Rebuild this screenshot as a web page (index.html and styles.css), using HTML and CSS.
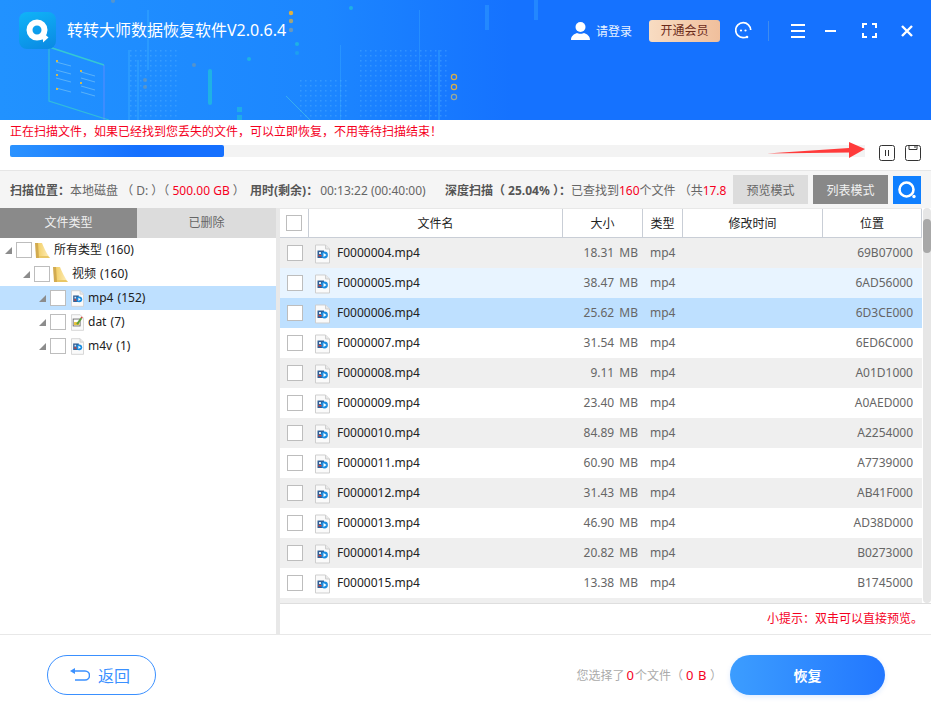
FILE: index.html
```html
<!DOCTYPE html>
<html lang="zh-CN">
<head>
  <meta charset="UTF-8">
  <title>转转大师数据恢复软件</title>
  <link rel="stylesheet" href="styles.css">
</head>
<body>
<svg class="defs" width="0" height="0">
  <defs>
    <linearGradient id="folder-fill" x1="0" y1="0" x2="1" y2="0">
      <stop offset="0" stop-color="#f2cf68"/>
      <stop offset="1" stop-color="#fff0c0"/>
    </linearGradient>
  </defs>
  <symbol id="ico-video" viewBox="0 0 15 19">
    <path d="M.5.5h10l4 4v14H.5z" fill="#fafafa" stroke="#cfcfcf"/>
    <path d="M10.500.5v4h4" fill="#e8e8e8" stroke="#cfcfcf"/>
    <rect x="2.500" y="6" width="6.500" height="7.500" fill="#2f5f96"/>
    <rect x="4" y="7.500" width="2" height="2" fill="#d8e6f5"/>
    <circle cx="9.500" cy="10.500" r="3.400" fill="#1a8de0"/>
    <path d="M8.500 8.500l3 2-3 2z" fill="#fff"/>
    <rect x="3.500" y="10.500" width="3" height="1.400" fill="#d8433a"/>
  </symbol>
  <symbol id="ico-dat" viewBox="0 0 15 19">
    <path d="M.5.5h10l4 4v14H.5z" fill="#fafafa" stroke="#cfcfcf"/>
    <rect x="2.500" y="5.500" width="8" height="8" fill="#fff" stroke="#666"/>
    <rect x="3.500" y="9" width="6" height="3.500" fill="#e8c23a"/>
    <path d="M6 11l5-7 2 1-5 7z" fill="#5f9e3a"/>
    <path d="M11 4l2 1 .5-1.500-1.500-1z" fill="#d8433a"/>
  </symbol>
  <symbol id="ico-folder" viewBox="0 0 16 17">
    <path d="M0 1h4l1 1v14H1z" fill="#d2ab50"/>
    <path d="M3 1h4c2 5 5 11 8 15H4z" fill="url(#folder-fill)"/>
    <path d="M4 16h11l-2-2H4z" fill="#e9c766"/>
  </symbol>
  <pattern id="dots" width="5" height="5" patternUnits="userSpaceOnUse">
    <rect width="1.500" height="1.500" fill="#6fc4ff" fill-opacity=".28"/>
  </pattern>
</svg>

<div class="app">
  <header class="top">
    <svg class="top-art" width="931" height="120" viewBox="0 0 931 120">
      <g fill="url(#dots)">
        <rect x="128" y="50" width="50" height="70"/>
        <rect x="360" y="50" width="90" height="70"/>
        <rect x="300" y="80" width="50" height="40"/>
      </g>
      <path d="M49 47l55 18" fill="none" stroke="#3fe0c0" stroke-opacity=".7" stroke-width="1.400"/>
      <path d="M49 47v54l60 19" fill="none" stroke="#3fe0c0" stroke-opacity=".55" stroke-width="1.200"/>
      <path d="M104 65v55" fill="none" stroke="#9a8cff" stroke-opacity=".4" stroke-width="1.200"/>
      <g stroke="#9fdcf0" stroke-opacity=".45" stroke-width="1">
        <path d="M56 62l15 4M56 70l15 4M56 78l15 4M56 88l15 4M81 72l14 4M81 78l14 4M81 86l14 4M81 92l14 4"/>
      </g>
      <g fill="#f0c030" fill-opacity=".85">
        <rect x="56" y="60" width="2" height="2"/><rect x="56" y="74" width="2" height="2"/>
        <rect x="56" y="88" width="2" height="2"/><rect x="80" y="70" width="2" height="2"/>
        <rect x="80" y="82" width="2" height="2"/>
      </g>
      <g fill="#47c0ff" fill-opacity=".28">
        <rect x="128" y="50" width="2" height="70"/><rect x="137" y="60" width="2" height="60"/>
        <rect x="147" y="10" width="2" height="60"/><rect x="340" y="45" width="1" height="75"/>
        <rect x="419" y="10" width="1" height="60"/><rect x="438" y="50" width="2" height="70"/>
        <rect x="429" y="60" width="1" height="60"/><rect x="485" y="5" width="4" height="25"/>
        <rect x="534" y="0" width="4" height="20"/>
      </g>
      <rect x="208" y="69" width="4" height="36" rx="2" fill="#1fc3d8" fill-opacity=".7"/>
      <rect x="237" y="107" width="5" height="5" fill="#1fc3d8" fill-opacity=".6"/>
      <rect x="237" y="115" width="5" height="5" fill="#1fc3d8" fill-opacity=".6"/>
      <path d="M286 96l24 24" stroke="#4fd4e0" stroke-opacity=".5"/>
      <g fill="#e0b040">
        <circle cx="291" cy="13" r="2.200"/>
        <circle cx="291" cy="21" r="2.200" fill-opacity=".7"/>
        <circle cx="291" cy="30" r="2.200" fill="#8aa0a0" fill-opacity=".7"/>
      </g>
      <g fill="#1fc3d8" fill-opacity=".7">
        <circle cx="351" cy="8" r="2"/><circle cx="297" cy="44" r="2"/>
        <circle cx="297" cy="53" r="2" fill-opacity=".4"/><circle cx="249" cy="59" r="2"/>
      </g>
      <g fill="#7a9aaa" fill-opacity=".6">
        <circle cx="194" cy="65" r="2"/><circle cx="145" cy="80" r="2"/><circle cx="145" cy="87" r="2"/>
        <circle cx="113" cy="1" r="2"/>
      </g>
      <g fill="none" stroke="#d8ac48" stroke-width="1.200">
        <circle cx="454" cy="77" r="2.600"/><circle cx="454" cy="87" r="2.600"/>
        <circle cx="454" cy="97" r="2.600" stroke="#9aa89a"/>
      </g>
    </svg>
    <div class="top-row">
      <div class="logo">
        <svg width="37" height="37" viewBox="0 0 37 37">
          <circle cx="18" cy="18" r="7.500" fill="none" stroke="#fff" stroke-width="6"/>
          <path d="M20 24h4v-3.500l5.500 5-5.500 5v-3h-5z" fill="#fff"/>
        </svg>
      </div>
      <div class="app-name">转转大师数据恢复软件V2.0.6.4</div>
      <div class="top-tools">
        <svg class="ic-user" width="19" height="18" viewBox="0 0 19 18">
          <ellipse cx="9.500" cy="5" rx="5" ry="5" fill="#fff"/>
          <path d="M0 18c0-4 3-6 6-7 1 1 6 1 7 0 3 1 6 3 6 7z" fill="#fff"/>
        </svg>
        <span class="login">请登录</span>
        <span class="vip">开通会员</span>
        <svg class="ic-help" width="18" height="19" viewBox="0 0 18 19">
          <path d="M15.700 9A7.500 7.500 0 1 0 8 16.700c1.500 0 3-.2 4-.7" fill="none" stroke="#fff" stroke-width="1.700"/>
          <circle cx="6" cy="9.500" r="1.100" fill="#fff"/><circle cx="10.500" cy="9.500" r="1.100" fill="#fff"/>
          <circle cx="12" cy="16" r="1.300" fill="#fff"/>
        </svg>
        <i class="top-sep"></i>
        <svg class="ic-menu" width="14" height="14" viewBox="0 0 14 14">
          <path d="M0 1h14M0 7h14M0 13h14" stroke="#fff" stroke-width="2"/>
        </svg>
        <svg class="ic-min" width="11" height="2" viewBox="0 0 11 2"><path d="M0 1h11" stroke="#fff" stroke-width="2"/></svg>
        <svg class="ic-full" width="15" height="15" viewBox="0 0 15 15">
          <path d="M1 5V1h4M10 1h4v4M14 10v4h-4M5 14H1v-4" fill="none" stroke="#fff" stroke-width="2"/>
        </svg>
        <svg class="ic-close" width="12" height="12" viewBox="0 0 12 12">
          <path d="M1 1l10 10M11 1L1 11" stroke="#fff" stroke-width="2.400"/>
        </svg>
      </div>
    </div>
  </header>

  <section class="scan">
    <p class="scan-msg">正在扫描文件，如果已经找到您丢失的文件，可以立即恢复，不用等待扫描结束！</p>
    <div class="scan-row">
      <div class="track"><div class="fill"></div></div>
      <svg class="btn-ic" width="16" height="16" viewBox="0 0 16 16">
        <rect x=".5" y=".5" width="15" height="15" rx="2" fill="#fff" stroke="#333"/>
        <path d="M6.500 5v6M9.500 5v6" stroke="#333"/>
      </svg>
      <svg class="btn-ic" width="16" height="16" viewBox="0 0 16 16">
        <rect x=".5" y=".5" width="15" height="15" rx="2" fill="#fff" stroke="#333"/>
        <path d="M4 .5v4h8v-4M10 1v2" fill="none" stroke="#333"/>
      </svg>
    </div>
    <svg class="arrow" width="100" height="18" viewBox="0 0 100 18">
      <path d="M0 11.500L82 6 82 0 98 7 82 16 82 10.500z" fill="#ff3b3b"/>
    </svg>
  </section>

  <section class="info">
    <div class="info-text">
      <span class="seg1"><b>扫描位置：</b>本地磁盘 （ D: ）（ <em>500.00 GB</em> ）</span>
      <span class="seg2"><b>用时(剩余)：</b>00:13:22 (00:40:00)</span>
      <span class="seg3"><b>深度扫描（ 25.04% ）：</b>已查找到<em>160</em>个文件 （共<em>17.8</em></span>
    </div>
    <button class="mode">预览模式</button>
    <button class="mode on">列表模式</button>
    <button class="search">
      <svg width="20" height="20" viewBox="0 0 20 20">
        <circle cx="9.500" cy="9.500" r="7" fill="none" stroke="#fff" stroke-width="2.600"/>
        <circle cx="17" cy="16.500" r="1.700" fill="#fff"/>
      </svg>
    </button>
  </section>

  <main class="body">
    <aside class="side">
      <div class="tabs">
        <div class="tab on">文件类型</div>
        <div class="tab">已删除</div>
      </div>
      <ul class="tree">
        <li class="lv0"><i class="tri"></i><i class="chk"></i><svg class="ic-f"><use href="#ico-folder"/></svg><span>所有类型 (160)</span></li>
        <li class="lv1"><i class="tri"></i><i class="chk"></i><svg class="ic-f"><use href="#ico-folder"/></svg><span>视频 (160)</span></li>
        <li class="lv2 sel"><i class="tri"></i><i class="chk"></i><svg class="ic-t"><use href="#ico-video"/></svg><span>mp4 (152)</span></li>
        <li class="lv2"><i class="tri"></i><i class="chk"></i><svg class="ic-t"><use href="#ico-dat"/></svg><span>dat (7)</span></li>
        <li class="lv2"><i class="tri"></i><i class="chk"></i><svg class="ic-t"><use href="#ico-video"/></svg><span>m4v (1)</span></li>
      </ul>
    </aside>

    <div class="list">
      <div class="table-wrap">
        <div class="table">
          <div class="thead">
            <div class="th"><i class="chk"></i></div>
            <div class="th">文件名</div>
            <div class="th">大小</div>
            <div class="th">类型</div>
            <div class="th">修改时间</div>
            <div class="th">位置</div>
          </div>
          <div class="tr gray"><div class="c-chk"><i class="chk"></i></div><div class="c-name"><svg class="ic-r"><use href="#ico-video"/></svg><span>F0000004.mp4</span></div><div class="c-size">18.31 MB</div><div class="c-type">mp4</div><div></div><div class="c-pos">69B07000</div></div>
          <div class="tr hover"><div class="c-chk"><i class="chk"></i></div><div class="c-name"><svg class="ic-r"><use href="#ico-video"/></svg><span>F0000005.mp4</span></div><div class="c-size">38.47 MB</div><div class="c-type">mp4</div><div></div><div class="c-pos">6AD56000</div></div>
          <div class="tr sel"><div class="c-chk"><i class="chk"></i></div><div class="c-name"><svg class="ic-r"><use href="#ico-video"/></svg><span>F0000006.mp4</span></div><div class="c-size">25.62 MB</div><div class="c-type">mp4</div><div></div><div class="c-pos">6D3CE000</div></div>
          <div class="tr"><div class="c-chk"><i class="chk"></i></div><div class="c-name"><svg class="ic-r"><use href="#ico-video"/></svg><span>F0000007.mp4</span></div><div class="c-size">31.54 MB</div><div class="c-type">mp4</div><div></div><div class="c-pos">6ED6C000</div></div>
          <div class="tr gray"><div class="c-chk"><i class="chk"></i></div><div class="c-name"><svg class="ic-r"><use href="#ico-video"/></svg><span>F0000008.mp4</span></div><div class="c-size">9.11 MB</div><div class="c-type">mp4</div><div></div><div class="c-pos">A01D1000</div></div>
          <div class="tr"><div class="c-chk"><i class="chk"></i></div><div class="c-name"><svg class="ic-r"><use href="#ico-video"/></svg><span>F0000009.mp4</span></div><div class="c-size">23.40 MB</div><div class="c-type">mp4</div><div></div><div class="c-pos">A0AED000</div></div>
          <div class="tr gray"><div class="c-chk"><i class="chk"></i></div><div class="c-name"><svg class="ic-r"><use href="#ico-video"/></svg><span>F0000010.mp4</span></div><div class="c-size">84.89 MB</div><div class="c-type">mp4</div><div></div><div class="c-pos">A2254000</div></div>
          <div class="tr"><div class="c-chk"><i class="chk"></i></div><div class="c-name"><svg class="ic-r"><use href="#ico-video"/></svg><span>F0000011.mp4</span></div><div class="c-size">60.90 MB</div><div class="c-type">mp4</div><div></div><div class="c-pos">A7739000</div></div>
          <div class="tr gray"><div class="c-chk"><i class="chk"></i></div><div class="c-name"><svg class="ic-r"><use href="#ico-video"/></svg><span>F0000012.mp4</span></div><div class="c-size">31.43 MB</div><div class="c-type">mp4</div><div></div><div class="c-pos">AB41F000</div></div>
          <div class="tr"><div class="c-chk"><i class="chk"></i></div><div class="c-name"><svg class="ic-r"><use href="#ico-video"/></svg><span>F0000013.mp4</span></div><div class="c-size">46.90 MB</div><div class="c-type">mp4</div><div></div><div class="c-pos">AD38D000</div></div>
          <div class="tr gray"><div class="c-chk"><i class="chk"></i></div><div class="c-name"><svg class="ic-r"><use href="#ico-video"/></svg><span>F0000014.mp4</span></div><div class="c-size">20.82 MB</div><div class="c-type">mp4</div><div></div><div class="c-pos">B0273000</div></div>
          <div class="tr"><div class="c-chk"><i class="chk"></i></div><div class="c-name"><svg class="ic-r"><use href="#ico-video"/></svg><span>F0000015.mp4</span></div><div class="c-size">13.38 MB</div><div class="c-type">mp4</div><div></div><div class="c-pos">B1745000</div></div>
          <div class="tr gray"></div>
        </div>
        <div class="scrollbar"><div class="thumb"></div></div>
      </div>
      <div class="tip">小提示：双击可以直接预览。</div>
    </div>
  </main>

  <footer class="foot">
    <button class="back">
      <svg width="20" height="14" viewBox="0 0 20 14">
        <path d="M4 3h11a4.500 4.500 0 0 1 0 9H5" fill="none" stroke="#3a90ff" stroke-width="1.500"/>
        <path d="M5 0v6L0 3z" fill="#3a90ff"/>
      </svg>
      返回
    </button>
    <div class="picked">您选择了<em class="n">0</em>个文件（ <em class="sz">0 B</em> ）</div>
    <button class="recover">恢复</button>
  </footer>
</div>
</body>
</html>
```

FILE: styles.css
```css
*{margin:0; padding:0; box-sizing:border-box; list-style:none;}
html,body{width:931px; height:715px; overflow:hidden; background:#fff;}
body{font-family:"Noto Sans","Noto Sans CJK SC",sans-serif; font-size:12px; color:#333;}
em{font-style:normal; color:#f5001e;}
i{display:block; font-style:normal;}
button{font-family:inherit; border:none; cursor:pointer;}
.defs{position:absolute;}
.app{display:flex; flex-direction:column; height:715px;}

/* header */
.top{position:relative; height:120px; flex:none; background:linear-gradient(90deg,#2192ff 0,#1c86ff 35%,#1572ff 55%,#1572ff 100%); overflow:hidden;}
.top-art{position:absolute; left:0; top:0;}
.top-row{position:relative; display:flex; align-items:center; height:37px; margin-top:12px; padding:0 18px 0 19px;}
.logo{width:37px; height:37px; border-radius:8px; background:linear-gradient(160deg,#10b4f8,#0a88e2);}
.app-name{margin-left:11px; font-size:16px; color:#fff; line-height:37px;}
.top-tools{margin-left:auto; display:flex; align-items:center; color:#fff;}
.login{margin-left:6px; margin-right:17px; color:#e8f2ff;}
.vip{width:71px; height:22px; line-height:22px; text-align:center; border-radius:3px; background:linear-gradient(90deg,#f8dcc2,#f0bf9c); color:#6b2a1a;}
.ic-help{margin-left:15px;}
.top-sep{width:1px; height:20px; margin-left:15px; background:#3e8cf0;}
.ic-menu{margin-left:22px;}
.ic-min{margin-left:20px;}
.ic-full{margin-left:26px;}
.ic-close{margin-left:24px;}

/* scan progress */
.scan{position:relative; height:51px; flex:none; padding:4px 10px 0; border-bottom:1px solid #e6e6e6;}
.scan-msg{color:#f5001e; line-height:15px; height:15px;}
.scan-row{display:flex; align-items:flex-start; gap:10px; margin-top:6px;}
.track{width:855px; height:12px; background:#f3f3f3; margin-right:4px;}
.fill{width:214px; height:12px; border-radius:2px; background:linear-gradient(90deg,#2b93ff,#1570ff 60%);}
.btn-ic{flex:none;}
.arrow{position:absolute; left:767px; top:22px;}

/* info bar */
.info{height:37px; flex:none; display:flex; align-items:center; padding:0 10px; background:#f5f5f5;}
.info-text{flex:1; min-width:0; display:flex; white-space:nowrap; color:#666;}
.info-text b{color:#555;}
.seg1{width:240px; flex:none;}
.seg2{width:195px; flex:none;}
.seg2 b{margin-right:2px;}
.mode{width:75px; height:29px; margin-right:5px; background:#dcdcdc; color:#666; font-size:12px;}
.mode.on{background:#888; color:#f2f2f2;}
.search{width:28px; height:28px; background:#0f7fff; display:flex; align-items:center; justify-content:center;}

/* main */
.body{flex:1; min-height:0; display:flex;}
.side{width:280px; flex:none; border-right:4px solid #e8e8e8;}
.tabs{display:flex; height:30px; line-height:30px; text-align:center;}
.tab{width:139px; background:#dcdcdc; color:#666;}
.tab.on{width:137px; background:#8a8a8a; color:#f0f0f0;}
.tree li{display:flex; align-items:center; height:24px; color:#222;}
.tree li span{margin-bottom:2px; word-spacing:1px;}
.tree li.sel{background:#bee0ff;}
.lv0{padding-left:5px;}
.lv1{padding-left:23px;}
.lv2{padding-left:39px;}
.tri{width:0; height:0; border-style:solid; border-width:0 0 7px 7px; border-color:transparent transparent #8c8c8c transparent; margin-right:4px;}
.chk{width:16px; height:16px; background:#fff; border:1px solid #bdbdbd; flex:none;}
.ic-f{width:16px; height:17px; margin:0 3px; flex:none;}
.ic-t{width:13px; height:17px; margin:0 4px 0 5px; flex:none;}

.list{flex:1; min-width:0; display:flex; flex-direction:column;}
.table-wrap{display:flex; height:396px; border-bottom:1px solid #dedede;}
.table{width:642px; flex:none; overflow:hidden;}
.thead,.tr{display:grid; grid-template-columns:29px 254px 80px 40px 140px 99px; height:30px; align-items:center;}
.thead{height:30px; border-bottom:1px solid #c9ced6; border-top:1px solid #e8e8e8; color:#222; align-items:stretch;}
.th{display:flex; align-items:center; justify-content:center; border-right:1px solid #c9ced6;}
.tr{color:#666;}
.tr.gray{background:#efefef;}
.tr.hover{background:#e8f4ff;}
.tr.sel{background:#bee0ff;}
.c-chk{padding-left:7px;}
.c-name{display:flex; align-items:center; color:#222;}
.c-name span{margin-bottom:2px;}
.ic-r{width:15px; height:20px; margin:1px 7px 0 6px; flex:none;}
.c-size{text-align:right; padding:0 5px 2px 0; word-spacing:2px;}
.c-type{padding:0 0 2px 7px;}
.c-pos{text-align:right; padding:0 9px 2px 0;}
.scrollbar{width:8px; margin-left:1px; background:#e6e6e6; border-radius:4px;}
.thumb{width:8px; height:34px; margin-top:11px; background:#a8a8a8; border-radius:4px;}
.tip{height:30px; line-height:30px; text-align:right; padding-right:8px; color:#f5001e;}

/* footer */
.foot{height:81px; flex:none; display:flex; align-items:center; padding:0 46px 0 47px; border-top:1px solid #e8e8e8;}
.back{width:109px; height:40px; display:flex; align-items:center; gap:8px; padding-left:22px; border:1px solid #3a90ff; border-radius:20px; background:#fff; color:#3a90ff; font-size:16px;}
.picked{margin-left:auto; color:#aaa;}
.picked .n{margin:0 1px 0 2px; font-size:13px;}
.picked .sz{letter-spacing:.5px; font-size:13px;}
.recover{width:155px; height:40px; margin-left:8px; border-radius:20px; background:linear-gradient(90deg,#3c9dff,#2277ff); color:#fff; font-size:14px; font-weight:bold; box-shadow:0 2px 5px rgba(40,120,255,.15);}
```
